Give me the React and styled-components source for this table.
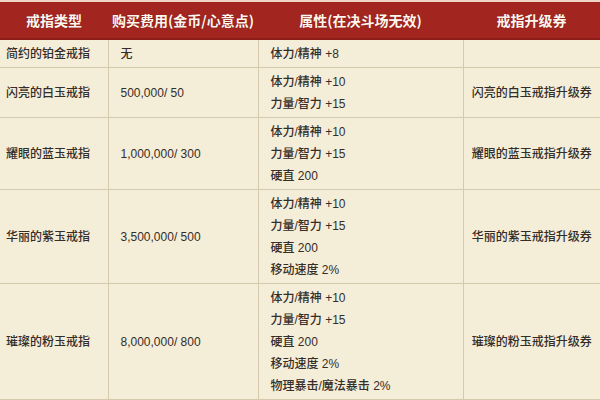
import React from 'react';
import styled, { createGlobalStyle } from 'styled-components';

const rings = [
  { name: '简约的铂金戒指', cost: '无', stats: ['体力/精神 +8'], ticket: '' },
  {
    name: '闪亮的白玉戒指',
    cost: '500,000/ 50',
    stats: ['体力/精神 +10', '力量/智力 +15'],
    ticket: '闪亮的白玉戒指升级券',
  },
  {
    name: '耀眼的蓝玉戒指',
    cost: '1,000,000/ 300',
    stats: ['体力/精神 +10', '力量/智力 +15', '硬直 200'],
    ticket: '耀眼的蓝玉戒指升级券',
  },
  {
    name: '华丽的紫玉戒指',
    cost: '3,500,000/ 500',
    stats: ['体力/精神 +10', '力量/智力 +15', '硬直 200', '移动速度 2%'],
    ticket: '华丽的紫玉戒指升级券',
  },
  {
    name: '璀璨的粉玉戒指',
    cost: '8,000,000/ 800',
    stats: [
      '体力/精神 +10',
      '力量/智力 +15',
      '硬直 200',
      '移动速度 2%',
      '物理暴击/魔法暴击 2%',
    ],
    ticket: '璀璨的粉玉戒指升级券',
  },
];

const GlobalStyle = createGlobalStyle`
  html, body {
    margin: 0;
    padding: 0;
    width: 600px;
    height: 400px;
    overflow: hidden;
    background: #f4edd8;
  }
`;

export default function App() {
  return (
    <>
      <GlobalStyle />
      <Table>
        <colgroup>
          <col style={{ width: 108 }} />
          <col style={{ width: 150 }} />
          <col style={{ width: 205 }} />
          <col style={{ width: 137 }} />
        </colgroup>
        <thead>
          <tr>
            <Th>戒指类型</Th>
            <Th>购买费用(金币/心意点)</Th>
            <Th>属性(在决斗场无效)</Th>
            <Th>戒指升级券</Th>
          </tr>
        </thead>
        <tbody>
          {rings.map(r => (
            <tr key={r.name}>
              <Td $pad="6px">{r.name}</Td>
              <Td $pad="12px">{r.cost}</Td>
              <Td $pad="12px">
                {r.stats.map(s => (
                  <Line key={s}>{s}</Line>
                ))}
              </Td>
              <Td $center>{r.ticket}</Td>
            </tr>
          ))}
        </tbody>
      </Table>
    </>
  );
}

const Table = styled.table`
  width: 600px;
  border-collapse: collapse;
  table-layout: fixed;
  background: #f4edd8;
  font-family: 'Liberation Sans', 'Noto Sans CJK SC', sans-serif;
  font-size: 12px;
  font-weight: 500;
  color: #352d28;
`;

const Th = styled.th`
  height: 36px;
  padding: 0;
  background: #a3251f;
  border-top: 2px solid #eed6c6;
  border-bottom: 2px solid #8c1d18;
  color: #fff7ee;
  font-family: 'Noto Sans CJK SC', sans-serif;
  font-size: 14px;
  font-weight: 700;
  text-align: center;
  vertical-align: middle;
  text-shadow: 0 0 1px rgba(80, 10, 5, 0.6);
`;

const Td = styled.td`
  padding: 3px ${p => (p.$center ? '0' : '4px')} 2px ${p => p.$pad || '0'};
  border: 1px solid #d6caae;
  border-top: none;
  line-height: 22px;
  vertical-align: middle;
  text-align: ${p => (p.$center ? 'center' : 'left')};
  white-space: nowrap;

  &:first-child {
    border-left: none;
  }
  &:last-child {
    border-right: none;
  }
`;

const Line = styled.div`
  height: 22px;
`;
